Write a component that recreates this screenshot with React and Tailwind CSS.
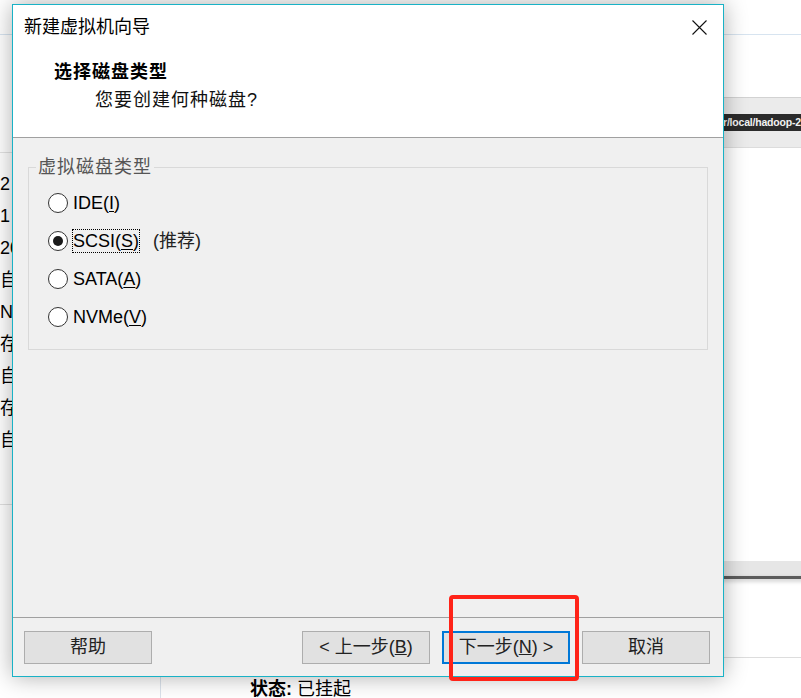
import React from 'react';

const font = 'font-["Liberation_Sans","Noto_Sans_CJK_SC",sans-serif]';

const sideRows = ['2', '1', '20', '自', 'N', '存', '自', '存', '自'];

const disks = [
    { label: 'IDE', key: 'I' },
    { label: 'SCSI', key: 'S', checked: true, note: '(推荐)' },
    { label: 'SATA', key: 'A' },
    { label: 'NVMe', key: 'V' },
];

const Radio = ({ checked }) => (
    <span className="flex h-[20px] w-[20px] shrink-0 items-center justify-center rounded-full border border-[#333333] bg-white">
        {checked && <span className="h-[10px] w-[10px] rounded-full bg-[#1a1a1a]" />}
    </span>
);

const Btn = ({ children, primary }) => (
    <button
        type="button"
        className={
            primary
                ? 'flex h-[33px] w-[128px] items-center justify-center border-2 border-[#0078d7] bg-[#e1e1e1] text-[18px] text-[#222]'
                : 'flex h-[33px] w-[128px] items-center justify-center border border-[#adadad] bg-[#e1e1e1] text-[18px] text-[#222]'
        }
    >
        {children}
    </button>
);

const Background = () => (
    <div className="flex h-full w-full flex-col bg-white text-[18px] text-black">
        <div className="h-[35px] shrink-0 border-b border-[#d7e4f0]" />
        <div className="flex flex-1">
            <div className="w-[161px] shrink-0 border-r border-[#dbe3ec]">
                <div className="h-[118px] border-b border-[#e3e3e3]" />
                <div className="pt-[15px]">
                    {sideRows.map((t, i) => (
                        <div key={i} className="flex h-[32px] items-center leading-none">
                            {t}
                        </div>
                    ))}
                </div>
                <div className="h-[49px] border-b border-[#e0e0e0]" />
            </div>
            <div className="flex flex-1 flex-col">
                <div className="mt-[62px] ml-[30px] flex flex-col">
                    <div className="h-[50px] border-t border-[#d2d2d2] bg-[#ebebeb] pt-[16px]">
                        <div className="flex h-[17px] items-center overflow-hidden whitespace-nowrap bg-[#2b2b2b] pl-[532px] text-[10.5px] font-bold leading-none tracking-[-0.2px] text-[#f2f2f2]">
                            r/local/hadoop-2.7
                        </div>
                    </div>
                    <div className="h-[414px] border-t border-[#dcdcdc] bg-white" />
                    <div className="h-[15px] bg-[#e6e6e6]" />
                    <div className="h-[3px] bg-[#5c5c5c] shadow-[0_2px_4px_rgba(0,0,0,0.25)]" />
                </div>
                <div className="h-[79px] border-b border-[#dddddd]" />
                <div className="pl-[89px] pt-[19px] leading-[24px]">
                    <span className="font-bold">状态:</span> 已挂起
                </div>
            </div>
        </div>
    </div>
);

export default function App() {
    return (
        <div className={`relative h-[698px] w-[801px] overflow-hidden ${font}`}>
            <Background />

            <div className="absolute left-[12px] top-[4px] flex h-[673px] w-[712px] flex-col border border-[#19b2c6] bg-white shadow-[0_0_22px_rgba(0,0,0,0.32)]">
                <div className="flex h-[133px] shrink-0 flex-col border-b border-[#a0a0a0] bg-white">
                    <div className="flex h-[44px] items-center justify-between pl-[11px] pr-[16px]">
                        <span className="text-[18px] leading-none text-black">新建虚拟机向导</span>
                        <svg width="15" height="15" viewBox="0 0 15 15">
                            <path d="M0.5 0.5 L14.5 14.5 M14.5 0.5 L0.5 14.5" stroke="#111" strokeWidth="1.1" />
                        </svg>
                    </div>
                    <div className="pl-[41px] pt-[11px] text-[18px] font-bold leading-[24px] tracking-[1px] text-black">
                        选择磁盘类型
                    </div>
                    <div className="pl-[82px] pt-[4px] text-[18px] leading-[24px] tracking-[1px] text-[#111]">
                        您要创建何种磁盘?
                    </div>
                </div>

                <div className="flex-1 bg-[#f0f0f0] px-[15px] pt-[17px]">
                    <fieldset className="border border-[#d9d9d9] pb-[13px]">
                        <legend className="ml-[7px] px-[2px] text-[18px] leading-[24px] tracking-[1px] text-[#555]">
                            虚拟磁盘类型
                        </legend>
                        <div className="pl-[19px] pt-[5px]">
                            {disks.map((d) => (
                                <div key={d.label} className="flex h-[38px] items-center">
                                    <Radio checked={d.checked} />
                                    <span
                                        className={
                                            d.checked
                                                ? 'ml-[4px] flex h-[24px] items-center border border-dotted border-black text-[18px] text-black'
                                                : 'ml-[4px] flex h-[24px] items-center border border-transparent text-[18px] text-black'
                                        }
                                    >
                                        {d.label}(<u className="underline-offset-2">{d.key}</u>)
                                    </span>
                                    {d.note && <span className="ml-[13px] text-[18px] text-[#222]">{d.note}</span>}
                                </div>
                            ))}
                        </div>
                    </fieldset>
                </div>

                <div className="flex h-[59px] shrink-0 items-start border-t border-[#a0a0a0] bg-[#f0f0f0] pl-[11px] pr-[13px] pt-[13px]">
                    <Btn>帮助</Btn>
                    <div className="ml-auto flex gap-[12px]">
                        <Btn>
                            &lt; 上一步(<u>B</u>)
                        </Btn>
                        <Btn primary>
                            下一步(<u>N</u>) &gt;
                        </Btn>
                        <Btn>取消</Btn>
                    </div>
                </div>
            </div>

            <div className="pointer-events-none absolute left-[449px] top-[595px] h-[86px] w-[130px] rounded-[4px] border-[4px] border-[#ff2318]" />
        </div>
    );
}
